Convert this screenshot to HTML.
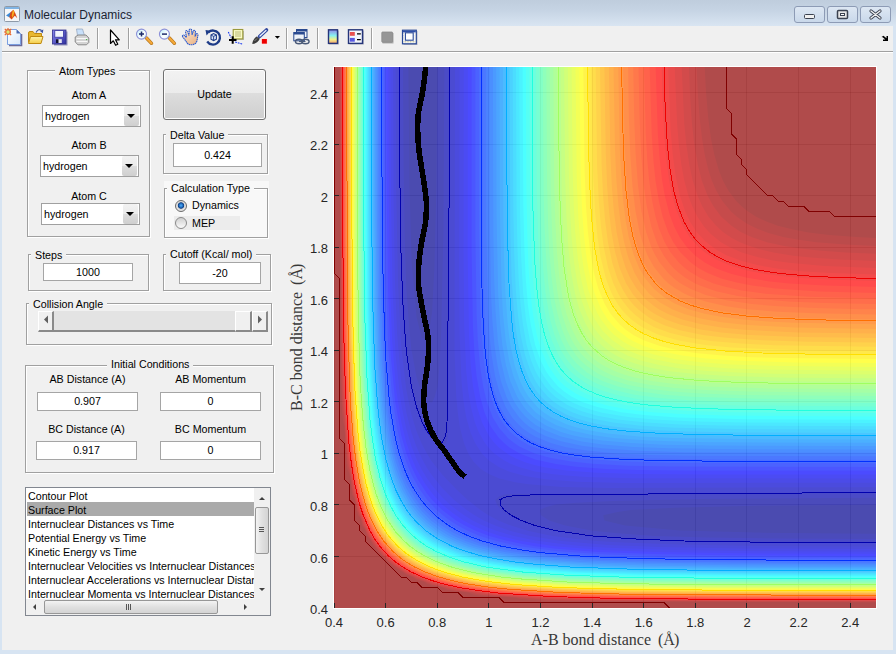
<!DOCTYPE html>
<html><head><meta charset="utf-8">
<style>
*{margin:0;padding:0;box-sizing:border-box}
html,body{width:896px;height:654px;overflow:hidden;background:#f0f0f0;font-family:"Liberation Sans",sans-serif;font-size:10.7px;color:#000}
.a{position:absolute}
#title{left:0;top:0;width:896px;height:26px;background:linear-gradient(#bfcddd,#c6d4e4 40%,#d9e5f2)}
#bl{left:0;top:26px;width:2px;height:628px;background:#d7e4f2}
#br{left:893px;top:26px;width:3px;height:628px;background:#d7e4f2}
#bb{left:0;top:650px;width:896px;height:4px;background:#d7e4f2}
#tbsep{left:2px;top:51px;width:891px;height:1px;background:#a0a0a0}
#tbsep2{left:2px;top:52px;width:891px;height:1px;background:#fff}
.panel{position:absolute;border:1px solid #a0a0a0;box-shadow:1px 1px 0 #fff, inset 1px 1px 0 #fff}
.ptitle{position:absolute;background:#f0f0f0;padding:0 4px;white-space:nowrap;line-height:13px}
.lbl{position:absolute;white-space:nowrap;line-height:13px;text-align:center}
.edit{position:absolute;background:#fff;border:1px solid #a5a5a5;text-align:center;line-height:17px}
.dd{position:absolute;background:#fff;border:1px solid #a0a0a0;line-height:21px;padding-left:2px}
.ddb{position:absolute;right:1px;top:0;bottom:0;width:15px;background:linear-gradient(#f2f2f2 0,#ebebeb 50%,#dddddd 50%,#cfcfcf 100%);border-radius:2px}
.ddb:after{content:"";position:absolute;left:3px;top:8px;border-left:4px solid transparent;border-right:4px solid transparent;border-top:4px solid #000}
.xt{position:absolute;top:615px;width:40px;text-align:center;font-size:13px;color:#262626;line-height:14px}
.yt{position:absolute;left:288px;width:40px;text-align:right;font-size:13px;color:#262626;line-height:14px}
.li{position:absolute;left:2px;height:14px;line-height:14px;white-space:nowrap}
.tsep{position:absolute;top:28px;width:1px;height:21px;background:#a0a0a0;box-shadow:1px 0 0 #fff}
.wb{position:absolute;top:6px;height:17px;border:1px solid #8d9bb5;border-radius:3px;background:linear-gradient(#dde7f3,#c9d8ea)}
</style></head><body>
<div class="a" id="title"></div>
<div class="a" id="bl"></div><div class="a" id="br"></div><div class="a" id="bb"></div>
<div class="a" id="tbsep"></div><div class="a" id="tbsep2"></div>
<div class="a" style="left:24px;top:8px;font-size:12px;color:#1b2433;line-height:15px">Molecular Dynamics</div>
<!-- window buttons -->
<div class="wb" style="left:794px;width:31px"></div>
<div class="wb" style="left:827px;width:31px"></div>
<div class="wb" style="left:860px;width:31px"></div>
<svg class="a" style="left:0;top:0" width="896" height="26">
 <rect x="4.5" y="6.5" width="15" height="15" rx="1" fill="#f6f7f8" stroke="#8e9aa8"/>
 <rect x="5" y="7" width="14" height="2" fill="#80b4e4"/>
 <path d="M6 15.5 L10.5 12.3 L12.2 14.6 L9.3 17.2 Z" fill="#3a8ad8"/>
 <path d="M10.5 12.3 L13.4 9.8 L15.2 13 L17.3 18.2 L14.8 15.8 L11.6 19.6 L9.3 17.2 Z" fill="#d84a18"/>
 <path d="M13.4 9.8 L14.3 12.3 L12.8 18 L11.8 15.3 L12.5 11.5 Z" fill="#f8b020"/>
 <rect x="804.5" y="14.5" width="10" height="4" rx="1" fill="#f0f0f0" stroke="#3b4250"/>
 <rect x="837.5" y="10.5" width="10" height="8" rx="1" fill="#e6e6e6" stroke="#3b4250" stroke-width="1.5"/>
 <rect x="840.5" y="13.5" width="4" height="2" fill="#fff" stroke="#3b4250" stroke-width="1"/>
 <path d="M871 11 L880 18 M880 11 L871 18" stroke="#3b4250" stroke-width="3.2" stroke-linecap="round"/>
 <path d="M871 11 L880 18 M880 11 L871 18" stroke="#f2f2f2" stroke-width="1.4" stroke-linecap="round"/>
</svg>
<!-- toolbar icons -->
<div class="tsep" style="left:97px"></div>
<div class="tsep" style="left:128px"></div>
<div class="tsep" style="left:286px"></div>
<div class="tsep" style="left:317px"></div>
<div class="tsep" style="left:371px"></div>
<svg class="a" style="left:0;top:0" width="896" height="54">
 <defs>
  <linearGradient id="pg" x1="0" y1="0" x2="1" y2="1"><stop offset="0" stop-color="#ffffff"/><stop offset="1" stop-color="#d8e8fa"/></linearGradient>
  <linearGradient id="fg" x1="0" y1="0" x2="0" y2="1"><stop offset="0" stop-color="#fff4a8"/><stop offset="1" stop-color="#f4cc48"/></linearGradient>
  <linearGradient id="sg" x1="0" y1="0" x2="1" y2="1"><stop offset="0" stop-color="#8a88f0"/><stop offset="1" stop-color="#3030a0"/></linearGradient>
  <linearGradient id="lg" x1="0" y1="0" x2="1" y2="1"><stop offset="0" stop-color="#b8ecf8"/><stop offset="0.6" stop-color="#ffffff"/><stop offset="1" stop-color="#c8f0f8"/></linearGradient>
  <linearGradient id="hg" x1="0" y1="0" x2="1" y2="1"><stop offset="0" stop-color="#fde8d4"/><stop offset="1" stop-color="#e8b080"/></linearGradient>
  <linearGradient id="cb" x1="0" y1="0" x2="0" y2="1"><stop offset="0" stop-color="#9088e8"/><stop offset="0.42" stop-color="#88f0f0"/><stop offset="0.72" stop-color="#f4f088"/><stop offset="1" stop-color="#f4a070"/></linearGradient>
 </defs>
 <!-- new -->
 <path d="M9 45.5 H21.5 V34" fill="none" stroke="#6a6a9a" stroke-width="1.6"/>
 <path d="M7.5 29.5 H16.5 L20.5 33.5 V44.5 H7.5 Z" fill="url(#pg)" stroke="#7a9ee0"/>
 <path d="M16.5 29.5 V33.5 H20.5 Z" fill="#4a68b0"/>
 <g stroke="#e86a30" stroke-width="1.2"><path d="M4.8 28.8 L6 30 M11.2 28.8 L10 30 M4.8 35.2 L6 34 M11.2 35.2 L10 34 M8 28 V29 M4 32 H5"/></g>
 <circle cx="8" cy="32" r="2.3" fill="#d8e870" stroke="#e86a30" stroke-width="1.3"/>
 <!-- open -->
 <path d="M28.5 42.5 V33 Q28.5 31.5 30 31.5 H33 L34.5 33.5 H41.5 V36" fill="#e8b830" stroke="#c08a10"/>
 <path d="M28.5 43.5 L30.5 36.5 H43 L41 43.5 Z" fill="url(#fg)" stroke="#c08a10"/>
 <path d="M36 32.5 Q38.5 28 41.5 30.5" fill="none" stroke="#4a62a0" stroke-width="1.3"/>
 <path d="M40 31 L43.3 29.5 L42.8 33.3 Z" fill="#3a52a0"/>
 <!-- save -->
 <rect x="54" y="31.5" width="13.5" height="14" fill="#5858a0" opacity="0.6"/>
 <rect x="52.5" y="30" width="13.5" height="14" fill="url(#sg)" stroke="#30308a" stroke-width="0.8"/>
 <rect x="54.8" y="30.6" width="8.6" height="6.6" fill="#f0f4fc" stroke="#3838a0" stroke-width="0.8"/>
 <rect x="56" y="39.2" width="5.8" height="3.8" fill="#e8e8f0"/>
 <rect x="56" y="39.2" width="2.5" height="3.8" fill="#101030"/>
 <!-- print -->
 <path d="M76.5 29 H82.5 L84.5 35.5 H77.5 Z" fill="#c8e0fa" stroke="#98a8c0" stroke-width="0.8"/>
 <path d="M75.2 37 L78 35 H86 L88.8 38 V42.5 L86.5 44.8 H78 L75.2 42 Z" fill="#d4d4d4" stroke="#808080" stroke-width="0.9"/>
 <path d="M76.5 38.5 H87.5 M76.5 41.5 H87.5" stroke="#f8f8f8" stroke-width="1"/>
 <circle cx="86.6" cy="39.6" r="0.7" fill="#40b040"/>
 <!-- pointer -->
 <path d="M110.5 30 V43.5 L113.3 40.8 L115.6 45.3 L117.8 44.3 L115.5 39.8 H119.3 Z" fill="#fff" stroke="#000" stroke-width="1.2" stroke-linejoin="round"/>
 <!-- zoom in -->
 <path d="M146.5 38 L151.5 43.3" stroke="#b07018" stroke-width="3.4" stroke-linecap="round"/>
 <path d="M146.5 38 L151.5 43.3" stroke="#f4a838" stroke-width="2.2" stroke-linecap="round"/>
 <circle cx="141.5" cy="34.1" r="5" fill="url(#lg)" stroke="#8c90d8" stroke-width="1.1"/>
 <path d="M139 34.1 H144 M141.5 31.6 V36.6" stroke="#1c2a6a" stroke-width="1.5"/>
 <!-- zoom out -->
 <path d="M169.4 38 L174.4 43.3" stroke="#b07018" stroke-width="3.4" stroke-linecap="round"/>
 <path d="M169.4 38 L174.4 43.3" stroke="#f4a838" stroke-width="2.2" stroke-linecap="round"/>
 <circle cx="164.4" cy="34.1" r="5" fill="url(#lg)" stroke="#8c90d8" stroke-width="1.1"/>
 <path d="M162 34.1 H167" stroke="#1c2a6a" stroke-width="1.5"/>
 <!-- hand -->
 <path d="M182.5 36.5 Q182 35 183.8 35 L186.5 37.5 L185.5 31.5 Q186 30 187.5 30.8 L189 35.5 L189.3 29.5 Q190.5 28.5 191.5 29.5 L192 35 L193.5 30.5 Q195 30 195.5 31.5 L195 36.5 L196.5 33.5 Q198 33.5 198 35 L197 40.5 Q196 44.8 191 44.8 Q188 44.8 186.5 42 Z" fill="url(#hg)" stroke="#2a5ad0" stroke-width="1.1" stroke-dasharray="1.6 0.5"/>
 <!-- rotate -->
 <path d="M208.3 32.3 A7 7 0 1 1 207.2 41.5" fill="none" stroke="#1e3c88" stroke-width="2.3"/>
 <path d="M205.5 30 L210.8 30.8 L206.5 35.5 Z" fill="#1e3c88"/>
 <path d="M211 35 L213.6 33.6 L216.4 35 V39.2 L213.6 40.6 L211 39.2 Z" fill="#dce6f8" stroke="#1e3c88" stroke-width="1.1"/>
 <path d="M211 35 L213.6 36.4 L216.4 35 M213.6 36.4 V40.6" fill="none" stroke="#1e3c88" stroke-width="0.9"/>
 <!-- data cursor -->
 <rect x="234" y="31" width="10" height="9" fill="#6a6a50" opacity="0.4"/>
 <rect x="233.2" y="29.5" width="9.6" height="9.4" fill="#fafac4" stroke="#9a9a3a" stroke-width="1.1"/>
 <path d="M235 32 H241 M235 34 H241 M235 36 H241" stroke="#a8a868" stroke-width="0.8"/>
 <path d="M228.3 32 L231 37.5 M235.2 42 L243 44.3" stroke="#1838f0" stroke-width="1.1" stroke-dasharray="1.8 0.9"/>
 <path d="M229 40 H236.5 M232.7 36.2 V43.8" stroke="#000" stroke-width="2"/>
 <!-- brush -->
 <path d="M259.5 36.5 L266.5 30" stroke="#3048a0" stroke-width="3.6" stroke-linecap="round"/>
 <path d="M260 36 L266 30.6" stroke="#e8f0ff" stroke-width="1.4" stroke-linecap="round"/>
 <path d="M252.3 44 Q252.5 39.5 256.5 36.5 L259.8 38.8 Q257.5 43.5 252.3 44 Z" fill="#3c3c3c"/>
 <path d="M254.5 41 L257 38.5" stroke="#aaa" stroke-width="0.7"/>
 <rect x="261.3" y="38.6" width="6" height="5.5" fill="#ee0000" stroke="#fff" stroke-width="0.8"/>
 <path d="M274.8 36 H280 L277.4 38.7 Z" fill="#000"/>
 <!-- link -->
 <rect x="296.5" y="29.5" width="10.5" height="8" fill="#f4f6fa" stroke="#2a4a90" stroke-width="1"/>
 <rect x="296.5" y="29.5" width="10.5" height="2" fill="#2a4a90"/>
 <rect x="293.8" y="32.5" width="10.5" height="8.3" fill="#eef2f8" stroke="#2a4a90" stroke-width="1"/>
 <rect x="293.8" y="32.5" width="10.5" height="2" fill="#2a4a90"/>
 <ellipse cx="299" cy="41.5" rx="3.6" ry="2.2" fill="none" stroke="#4a5a78" stroke-width="1.4"/>
 <ellipse cx="305.5" cy="41.5" rx="3.6" ry="2.2" fill="none" stroke="#4a5a78" stroke-width="1.4"/>
 <path d="M299 41.5 H305.5" stroke="#4a5a78" stroke-width="1.2"/>
 <!-- colorbar -->
 <rect x="329" y="30.5" width="10" height="14" fill="#606080" opacity="0.4"/>
 <rect x="328.5" y="29.8" width="9" height="13.6" fill="url(#cb)" stroke="#25357a" stroke-width="1.4"/>
 <!-- legend -->
 <rect x="349.5" y="30.5" width="14.5" height="14" fill="#606080" opacity="0.4"/>
 <rect x="348.5" y="29.8" width="14" height="13.6" fill="#f2f5fc" stroke="#25357a" stroke-width="1.4"/>
 <rect x="349.8" y="32" width="5" height="3.8" fill="#e85050"/>
 <rect x="349.8" y="37.9" width="5" height="3.8" fill="#5858e0"/>
 <path d="M357 33.8 H360.8 M357 39.6 H360.8" stroke="#000" stroke-width="1.3"/>
 <!-- hide tools -->
 <rect x="382.5" y="33" width="11" height="10.5" fill="#707070" opacity="0.5"/>
 <rect x="381.8" y="32" width="10.8" height="10.3" rx="0.8" fill="#969696" stroke="#8a8a8a" stroke-width="0.8"/>
 <!-- show tools -->
 <rect x="403.5" y="31" width="14" height="14" fill="#606080" opacity="0.4"/>
 <rect x="402.5" y="30.2" width="13.8" height="13.6" fill="#fff" stroke="#2a4a98" stroke-width="1.2"/>
 <rect x="403" y="30.6" width="12.8" height="1.8" fill="#3050a8"/>
 <rect x="405.4" y="32.8" width="7.8" height="7.4" fill="#fff" stroke="#2a4a98" stroke-width="1.1"/>
 <path d="M403.5 41.8 H415.5" stroke="#c8c8a8" stroke-width="1.6" stroke-dasharray="1 0.6"/>
 <path d="M403.6 33 V40 M415.2 33 V40" stroke="#c8c8c8" stroke-width="1" stroke-dasharray="1 0.8"/>
 <!-- right arrow -->
 <path d="M881.5 37 L883.5 35.7 L886.5 38.3 V36 H888 V41 H883 V39.5 H885.3 L882.7 37.3 Z" fill="#000"/>
</svg>

<!-- Atom types panel -->
<div class="panel" style="left:27px;top:70px;width:123px;height:167px"></div>
<div class="ptitle" style="left:55px;top:65px">Atom Types</div>
<div class="lbl" style="left:40px;top:89px;width:98px">Atom A</div>
<div class="dd" style="left:42px;top:105px;width:99px;height:22px">hydrogen<div class="ddb"></div></div>
<div class="lbl" style="left:40px;top:139px;width:98px">Atom B</div>
<div class="dd" style="left:40px;top:155px;width:99px;height:22px">hydrogen<div class="ddb"></div></div>
<div class="lbl" style="left:40px;top:190px;width:98px">Atom C</div>
<div class="dd" style="left:41px;top:203px;width:99px;height:22px">hydrogen<div class="ddb"></div></div>

<!-- Update button -->
<div class="a" style="left:163px;top:69px;width:103px;height:51px;border:1px solid #707070;border-radius:3px;background:linear-gradient(#f2f2f2 0,#ebebeb 47%,#dddddd 47%,#cfcfcf 100%);box-shadow:inset 0 0 0 1px #fcfcfc;text-align:center;line-height:49px">Update</div>

<!-- Delta -->
<div class="panel" style="left:163px;top:134px;width:105px;height:40px"></div>
<div class="ptitle" style="left:166px;top:129px">Delta Value</div>
<div class="edit" style="left:173px;top:143px;width:89px;height:24px;line-height:22px">0.424</div>

<!-- Calc type -->
<div class="a" style="left:164px;top:181px;width:105px;height:58px;background:#f8f8f8"></div>
<div class="panel" style="left:164px;top:188px;width:104px;height:50px"></div>
<div class="ptitle" style="left:167px;top:182px;background:#f8f8f8">Calculation Type</div>
<div class="a" style="left:175px;top:200px;width:12px;height:12px;border-radius:50%;border:1px solid #6a6a6a;background:radial-gradient(circle at 50% 45%,#4fb0ff 0,#1a60b0 30%,#0a3a80 38%,#d8d8d8 48%,#f6f6f6 100%)"></div>
<div class="lbl" style="left:192px;top:199px">Dynamics</div>
<div class="a" style="left:174px;top:216px;width:66px;height:14px;background:#ececec"></div>
<div class="a" style="left:175px;top:217px;width:12px;height:12px;border-radius:50%;border:1px solid #8a8a8a;background:linear-gradient(#d0d0d0,#fafafa)"></div>
<div class="lbl" style="left:192px;top:217px">MEP</div>

<!-- Steps -->
<div class="panel" style="left:28px;top:254px;width:121px;height:37px"></div>
<div class="ptitle" style="left:31px;top:249px">Steps</div>
<div class="edit" style="left:43px;top:263px;width:90px;height:18px">1000</div>
<!-- Cutoff -->
<div class="panel" style="left:163px;top:254px;width:108px;height:37px"></div>
<div class="ptitle" style="left:166px;top:248px">Cutoff (Kcal/ mol)</div>
<div class="edit" style="left:179px;top:262px;width:82px;height:22px;line-height:20px">-20</div>
<!-- Collision angle -->
<div class="panel" style="left:26px;top:303px;width:246px;height:42px"></div>
<div class="ptitle" style="left:29px;top:298px">Collision Angle</div>
<div class="a" style="left:38px;top:311px;width:230px;height:21px;background:#e3e3e3;border-bottom:2px solid #8a8a8a"></div>
<div class="a" style="left:38px;top:311px;width:16px;height:21px;background:#f0f0f0;border-left:1px solid #fff;border-top:1px solid #fff;border-right:2px solid #8a8a8a;border-bottom:2px solid #8a8a8a"></div>
<div class="a" style="left:235px;top:311px;width:17px;height:21px;background:#f0f0f0;border-left:1px solid #fff;border-top:1px solid #fff;border-right:2px solid #8a8a8a;border-bottom:2px solid #8a8a8a"></div>
<div class="a" style="left:252px;top:311px;width:16px;height:21px;background:#f0f0f0;border-left:1px solid #fff;border-top:1px solid #fff;border-right:2px solid #8a8a8a;border-bottom:2px solid #8a8a8a"></div>
<svg class="a" style="left:38px;top:311px" width="230" height="21"><path d="M6 8.5 L10 4.5 V12.5 Z" fill="#606060"/><path d="M224 8.5 L220 4.5 V12.5 Z" fill="#606060"/></svg>

<!-- Initial conditions -->
<div class="panel" style="left:25px;top:365px;width:249px;height:108px"></div>
<div class="ptitle" style="left:107px;top:358px">Initial Conditions</div>
<div class="lbl" style="left:37px;top:373px;width:101px">AB Distance (A)</div>
<div class="edit" style="left:37px;top:392px;width:101px;height:19px">0.907</div>
<div class="lbl" style="left:160px;top:373px;width:101px">AB Momentum</div>
<div class="edit" style="left:160px;top:392px;width:101px;height:19px">0</div>
<div class="lbl" style="left:36px;top:423px;width:101px">BC Distance (A)</div>
<div class="edit" style="left:36px;top:441px;width:101px;height:19px">0.917</div>
<div class="lbl" style="left:160px;top:423px;width:101px">BC Momentum</div>
<div class="edit" style="left:160px;top:441px;width:101px;height:19px">0</div>

<!-- listbox -->
<div class="a" style="left:25px;top:487px;width:246px;height:129px;background:#fff;border:1px solid #828790;overflow:hidden">
 <div class="a" style="left:0;top:0;width:228px;height:112px;overflow:hidden">
  <div class="a" style="left:1px;top:14px;width:227px;height:14px;background:#aaaaaa"></div>
  <div class="li" style="top:1px">Contour Plot</div>
  <div class="li" style="top:15px">Surface Plot</div>
  <div class="li" style="top:29px">Internuclear Distances vs Time</div>
  <div class="li" style="top:43px">Potential Energy vs Time</div>
  <div class="li" style="top:57px">Kinetic Energy vs Time</div>
  <div class="li" style="top:71px">Internuclear Velocities vs Internuclear Distances</div>
  <div class="li" style="top:85px">Internuclear Accelerations vs Internuclear Distances</div>
  <div class="li" style="top:99px">Internuclear Momenta vs Internuclear Distances</div>
 </div>
 <div class="a" style="left:228px;top:0;width:16px;height:111px;background:#f0f0f0"></div>
 <div class="a" style="left:229px;top:19px;width:14px;height:47px;border:1px solid #979797;border-radius:2px;background:linear-gradient(90deg,#f3f3f3,#e0e0e0 50%,#d4d4d4)"></div>
 <svg class="a" style="left:228px;top:0" width="16" height="111"><path d="M5 12 L8 9 L11 12 Z" fill="#404040"/><path d="M5 100 L8 103 L11 100 Z" fill="#404040"/><path d="M5 39.5 H10 M5 41.5 H10 M5 43.5 H10" stroke="#555" stroke-width="1"/></svg>
 <div class="a" style="left:0;top:111px;width:244px;height:16px;background:#f0f0f0"></div>
 <div class="a" style="left:18px;top:112px;width:174px;height:14px;border:1px solid #979797;border-radius:2px;background:linear-gradient(#f3f3f3,#e0e0e0 50%,#d4d4d4)"></div>
 <svg class="a" style="left:0;top:111px" width="244" height="16"><path d="M7 8 L10 5 V11 Z" fill="#404040"/><path d="M221 8 L218 5 V11 Z" fill="#404040"/><path d="M100.5 5 V11 M102.5 5 V11 M104.5 5 V11" stroke="#555" stroke-width="1"/></svg>
</div>

<div class="a" style="left:333px;top:66px;width:544px;height:543px;background:#fff"></div><svg id="plot" width="542" height="541" viewBox="0 0 542 541" style="position:absolute;left:334px;top:67px;overflow:hidden"><rect width="542" height="541" fill="#fff"/><path d="M0.5 0V541M0 541.5H542M51.5 0V541M0 489.5H542M103.5 0V541M0 437.5H542M154.5 0V541M0 386.5H542M206.5 0V541M0 334.5H542M258.5 0V541M0 283.5H542M309.5 0V541M0 231.5H542M361.5 0V541M0 180.5H542M412.5 0V541M0 128.5H542M464.5 0V541M0 77.5H542M516.5 0V541M0 25.5H542" stroke="#262626" stroke-opacity="0.15" stroke-width="1" fill="none"/><g opacity="0.7"><rect x="0" y="0" width="542" height="541" fill="#00008f"/><path fill="#00009f" d="M0 541L542 541 542 466.7 423.3 465.6 345.8 463.4 291.3 458.6 270.5 453.4 269.2 448.3 283.9 445.1 296.9 443.1 340.7 440.8 423.3 438.7 542 437.7 542 0 103.5 0 102.4 118.5 100.4 200.9 98.1 244.7 96.1 257.6 92.9 272.3 87.8 271 82.6 250.2 77.7 195.8 75.5 118.5 74.4 0 0 0 0 541Z"/><path fill="#0000af" d="M0 541L542 541 542 472.1 443.9 471.5 371.7 470.4 320.7 468.9 283.9 466.2 259 463.7 231.1 458.6 215.3 453.4 207 448.3 205.9 443.1 211.6 440.3 222 437.6 242.6 435.7 278.7 433.9 376.8 431.8 542 430.8 542 0 110.4 0 109.4 164.9 107.3 262.8 105.5 298.8 103.6 319.4 100.8 329.8 98.1 335.5 92.9 334.4 87.8 326.1 82.6 310.4 77.4 282.5 75 257.6 72.3 220.9 70.7 170 69.6 97.9 69 0 0 0 0 541Z"/><path fill="#0000bf" d="M0 541L542 541 542 476.1 423.3 475.5 345.8 474.2 299.4 472.3 253.2 468.9 219.1 463.7 198.7 458.6 184.8 453.4 174.8 448.3 167.7 443.1 163 438 161.3 432.8 165.2 429.2 170.1 427.6 180.7 427 542 425.2 542 0 116 0 114.2 360.7 113.6 371.3 112 376.1 108.4 380 103.2 378.3 98.1 373.6 92.9 366.5 87.8 356.6 82.6 342.7 77.4 322.3 72.3 288.2 68.8 242.2 66.9 195.8 65.7 118.5 65.1 0 0 0 0 541Z"/><path fill="#0000cf" d="M0 541L542 541 542 479.4 428.4 478.9 345.8 477.6 283.9 475.3 263.5 474 242.6 471.9 218.9 468.9 206.5 466.4 194 463.7 177.1 458.6 164.5 453.4 154.6 448.3 146.6 443.1 133.5 432.8 122.6 422.5 108.4 407.7 98.1 394.7 92.9 386.6 87.8 376.8 82.6 364.3 77.4 347.4 72.3 322.5 67.1 278 64.1 216.4 62.3 128.8 61.7 0 0 0 0 541ZM194.6 417.3L227.1 419.9 273.6 420.9 542 420.2 542 0 121 0 120.5 283.4 122.2 329.8 123.7 345.2 125.9 360.7 129.9 376.1 134.2 386.4 139.4 394.6 146.7 401.9 154.9 407 165.2 411.4 180.7 415.3 194.6 417.3Z"/><path fill="#0000df" d="M0 541L542 541 542 482.1 407.8 481.5 325.2 480.1 273.6 477.9 227.8 474 196.1 468.9 175.8 463.7 161.2 458.6 149.8 453.4 140.6 448.3 132.8 443.1 119.9 432.8 108.4 421.3 98.1 408.5 92.9 400.7 87.8 391.5 82.6 380.1 77.4 365.5 72.3 345.3 67.2 314.3 63.2 267.9 61 216.4 59.6 134 59 0 0 0 0 541ZM211.2 412.2L242.6 414.7 289.1 415.9 542 415.7 542 0 125.6 0 125.1 200.9 125.6 267.9 127.5 314.3 129.6 334.9 132.2 350.4 136.6 365.8 141.1 376.1 147.9 386.4 154.9 393.4 165.2 400.2 175.5 404.7 191 409 211.2 412.2Z"/><path fill="#0000ef" d="M0 541L542 541 542 484.7 423.3 484.3 340.7 483.1 273.6 480.7 248.6 479.2 232.3 477.6 206.5 474.3 196.2 472.4 179.2 468.9 162 463.7 148.9 458.6 138.6 453.4 129 447.6 116.3 438 108.4 430.5 98.1 418.6 92.9 411.3 87.8 402.7 82.6 392.3 77.4 379.3 72.3 362.1 67.7 340.1 66.1 329.8 61.6 288.5 58.5 221.6 57 134 56.4 0 0 0 0 541ZM217.7 407L232.3 408.6 252.9 410 299.4 411.3 542 411.4 542 0 129.8 0 129.6 185.5 130.2 257.6 132.2 304 134.3 324.6 136.9 340.1 140.9 355.5 145 365.8 151 376.1 155.1 381.3 160.3 386.4 170.3 393.6 176.6 396.7 185.8 400.3 201.3 404.4 217.7 407Z"/><path fill="#0000ff" d="M0 541L542 541 542 486.8 407.8 486.3 320 485 268.4 483 220.5 479.2 185.8 473.7 166 468.9 150.8 463.7 139 458.6 129.5 453.4 118.7 446.1 108.8 438 99.1 427.6 91.4 417.3 82.6 402.3 77.4 390.5 72.3 375.4 67.4 355.5 61.9 320.9 58.1 273.1 56.1 221.6 54.8 134 54.3 0 0 0 0 541ZM303 407L371.7 407.6 542 407.4 542 0 133.8 0 133.7 190.6 135 267.9 136.7 298.8 139 319.4 143 340.1 148 355.5 154.9 368.7 160 375.5 165.2 380.8 175.5 388.2 181.9 391.6 191 395.2 201.3 398.3 211.6 400.5 232.3 403.5 263.3 405.8 303 407Z"/><path fill="#0010ff" d="M0 541L542 541 542 488.9 407.8 488.4 325.2 487.2 263.3 485 222 481.7 200.7 479.2 185.8 476.5 173.5 474 155.1 468.9 141.5 463.7 130.8 458.6 122 453.4 108.2 443.1 98.1 433 92.9 426.6 83.6 412.2 77.4 399.7 72.3 386.2 67.1 367.9 61.2 334.9 56.8 290.3 54.1 226.7 52.8 139.1 52.2 0 0 0 0 541ZM272.9 401.9L304.6 403 351 403.5 542 403.6 542 0 137.7 0 137.6 180.3 138.9 257.6 140.6 288.5 142.6 309.1 146.2 329.8 150.5 345.2 154.8 355.5 157.6 360.7 165 371 170.2 376.1 175.5 380.4 185.8 386.5 201.3 392.4 222 397.1 242.6 399.8 272.9 401.9Z"/><path fill="#0020ff" d="M0 541L542 541 542 490.8 413 490.4 333 489.5 268.4 487.3 222 484.1 185.4 479.2 162.3 474 146 468.9 133.6 463.7 123.7 458.6 113.6 451.9 103.2 443.5 93.1 432.8 85.7 422.5 77.4 407.6 72.3 395.2 67.1 379 62.9 360.7 57.6 324.6 54.1 278.2 51.7 211.2 50.7 128.8 50.3 0 0 0 0 541ZM258.4 396.7L294.2 398.7 340.7 399.6 542 399.9 542 0 141.4 0 141.4 170 142.6 247.3 143.8 273.1 146 298.8 149.2 319.4 152.9 334.9 158.8 350.4 165.2 361.1 173.9 371 180.2 376.1 185.8 379.7 200.6 386.4 216.8 391 237.4 394.6 258.4 396.7Z"/><path fill="#0030ff" d="M0 541L542 541 542 492.5 402.6 492 314.9 490.8 263.3 489.1 211.6 485.1 196.2 483.1 173.1 479.2 149.7 473 138.2 468.9 126.9 463.7 117.7 458.6 103.2 448 93.2 438 85.3 427.6 77.4 414.4 72.3 403.1 67.1 388.4 62.6 371 56.8 336.8 52.6 288.5 50.4 231.9 49.1 144.3 48.6 0 0 0 0 541ZM249.1 391.6L283.9 394.3 335.5 395.7 542 396.2 542 0 145 0 145.1 159.7 146.2 237 147.6 267.9 149.3 288.5 152 309.1 155.3 324.6 160.3 340.1 165.2 350.3 168.4 355.5 175.5 364.3 185.8 372.9 196.2 378.8 211.6 384.6 227.1 388.3 249.1 391.6Z"/><path fill="#0040ff" d="M0 541L542 541 542 494.2 407.8 493.8 320 492.6 252.9 490.3 211.6 487 189.6 484.3 175.5 481.8 162.9 479.2 144.8 474 131.4 468.9 120.9 463.7 108.4 455.8 99.1 448.3 89.3 438 82.6 428.9 77.4 420.3 71.1 407 67.1 396.5 61.9 378.4 56.8 351.8 54.6 334.9 51.1 293.7 48.6 226.7 47.3 139.1 46.9 0 0 0 0 541ZM314.9 391.6L387.1 392.6 542 392.7 542 0 148.6 0 148.8 175.2 149.4 216.4 150.7 252.5 152.9 283.4 155.7 304 160 323.7 165.2 338.3 170.3 348.3 175.4 355.5 179.9 360.7 185.7 365.8 196.2 372.8 203.1 376.1 211.6 379.4 222 382.4 232.3 384.7 252.9 387.8 278.7 390 314.9 391.6Z"/><path fill="#0050ff" d="M0 541L542 541 542 495.7 413 495.4 330.4 494.6 268.4 492.7 216.6 489.5 177.4 484.3 154.9 479.4 144.5 476.3 129 470.5 118.7 465.4 107.5 458.6 98.1 451 90.1 443.1 82 432.8 73 417.3 67.1 403.5 61.9 387.2 58.2 371 55.5 355.5 52.7 334.9 51.2 319.4 49.1 288.5 46.7 221.6 45.8 139.1 45.3 0 0 0 0 541ZM283.3 386.4L314.9 387.9 361.3 388.8 542 389.2 542 0 152.1 0 152.3 159.7 153.8 237 155.5 267.9 157.7 288.5 161.1 309.1 165.3 324.6 171.7 340.1 178.3 350.4 182.6 355.5 188 360.7 194.9 365.8 201.3 369.6 216.8 376 232.3 380.2 252.9 383.6 283.3 386.4Z"/><path fill="#0060ff" d="M0 541L542 541 542 497.2 397.5 496.7 309.7 495.6 252.9 493.6 206.5 490.1 170.3 484.9 144.5 478.6 131.5 474 120 468.9 108.4 462.1 96.9 453.4 87.8 444.3 79 432.8 72.3 421.2 67.1 409.8 61.9 394.9 57.2 376.1 51.6 341.3 47.7 293.7 45.6 237 44.4 149.4 43.9 0 0 0 0 541ZM267.6 381.3L304.6 383.8 351 385.2 542 385.8 542 0 155.5 0 155.7 149.4 157 226.7 158.3 252.5 160.5 278.2 163.5 298.8 167 314.3 172.4 329.8 177.6 340.1 185.8 351.1 191 356.2 196.6 360.7 205 365.8 211.6 369 227.1 374.3 247.8 378.7 267.6 381.3Z"/><path fill="#0070ff" d="M0 541L542 541 542 498.6 402.6 498.2 314.9 497.1 247.8 494.9 206.5 491.7 186.9 489.5 170.3 486.7 158.4 484.3 139.6 479.2 125.9 474 115.1 468.9 103.2 461.4 93.2 453.4 83.6 443.1 77.4 434.7 72.3 426.1 65.8 412.2 61.9 401.7 56.8 382.9 51.8 355.5 49.9 340.1 46.4 298.8 44 231.9 42.9 144.3 42.5 0 0 0 0 541ZM334.3 381.3L407.8 382.3 542 382.4 542 0 158.9 0 159.3 164.9 160.1 211.2 161.4 242.2 163.8 273.1 166.8 293.7 171.7 314.3 177.7 329.8 180.7 335.4 185.8 343 191 349 196.2 353.8 201.3 357.7 211.6 363.6 227.1 369.6 247.8 374.5 268.4 377.5 299.4 379.9 334.3 381.3Z"/><path fill="#0080ff" d="M0 541L542 541 542 500 407.8 499.7 320 498.7 258.1 496.8 211.6 493.8 185.8 490.9 170.3 488.5 150.8 484.3 134.2 479.4 120.8 474 110.7 468.9 102.5 463.7 92.9 456.1 85 448.3 76.9 438 68.1 422.5 61.9 407.7 56.8 390.5 53.6 376.1 51.6 365.5 48.3 340.1 46.5 321.2 44.8 293.7 42.5 226.7 41.4 139.1 41.1 0 0 0 0 541ZM297.2 376.1L330.4 377.7 376.8 378.6 542 379.1 542 0 162.2 0 162.6 149.4 164.2 226.7 166.2 257.6 168.4 278.2 172.1 298.8 176.4 314.3 183.2 329.8 189.9 340.1 194.4 345.2 200 350.4 211.6 358.2 227.1 364.9 237.4 368 247.8 370.3 268.4 373.6 297.2 376.1Z"/><path fill="#008fff" d="M0 541L542 541 542 501.2 397.5 500.8 309.7 499.9 252.9 498 203.8 494.6 166.5 489.5 144.5 484.5 134.2 481.2 123.9 477.4 113.6 472.7 103.2 466.7 92.4 458.6 82.6 448.8 74.5 438 67.1 425 61.9 413.1 56.8 397.3 51.9 376.1 46.7 340.1 43.4 293.7 41.3 236.3 40.3 149.4 39.8 0 0 0 0 541ZM279.6 371L314.9 373.5 361.3 374.9 428.4 375.6 542 375.7 542 0 165.6 0 165.9 144.3 167.6 221.6 169 247.3 171.7 273.1 175.2 293.7 179.4 309.1 185.8 324.6 192.3 334.9 201.3 344.9 211.6 352.6 222 358 237.4 363.5 258.1 368.1 279.6 371Z"/><path fill="#009fff" d="M0 541L542 541 542 502.5 397.5 502.1 309.7 501.1 252.9 499.4 201.3 495.7 180.7 493.2 160 489.8 134.2 483.1 123.2 479.2 111.9 474 102.9 468.9 89.4 458.6 79.6 448.3 72.3 438.3 67.1 429.3 61.9 418 56.8 403.4 52.4 386.4 49.5 371 46.4 350.4 42.3 298.8 40.2 242.2 39.1 154.6 38.6 0 0 0 0 541ZM339.2 371L407.8 372.1 542 372.4 542 0 168.9 0 169.3 149.4 170 190.6 171.4 226.7 173.7 257.6 176.4 278.2 180.8 298.8 186.1 314.3 191 324.1 194.6 329.8 203.4 340.1 209.5 345.2 216.8 350.1 232.3 357.2 242.6 360.5 252.9 363 273.6 366.5 304.6 369.4 339.2 371Z"/><path fill="#00afff" d="M0 541L542 541 542 503.7 397.5 503.3 309.7 502.3 242.6 500.1 201.3 497.1 179.7 494.6 165.2 492.2 151.2 489.5 132.4 484.3 118.6 479.2 108 474 98.1 467.9 86.5 458.6 77.4 448.8 69.9 438 61.9 422.6 58 412.2 54.7 401.9 50.8 386.4 46.5 361.6 44.5 345.2 41.2 304 38.9 237 37.8 149.4 37.4 0 0 0 0 541ZM305.5 365.8L340.7 367.6 382 368.5 542 369.1 542 0 172.2 0 172.6 144.3 174.4 216.4 176 242.2 178.7 267.9 182.5 288.5 187 304 191 314 193.8 319.4 200.7 329.8 205.2 334.9 210.8 340.1 222 347.5 227.5 350.4 237.4 354.4 252.9 358.8 278.7 363.3 305.5 365.8Z"/><path fill="#00bfff" d="M0 541L542 541 542 504.9 397.5 504.5 309.7 503.5 247.8 501.6 201.3 498.4 175.5 495.4 160 492.7 144.7 489.5 127.4 484.3 114.5 479.2 104.4 474 92.9 466.4 83.8 458.6 74.8 448.3 67.8 438 61.9 426.7 56.8 413.9 51.6 396.6 48.4 381.3 45.7 365.8 43.2 345.2 41.3 324.9 39.8 298.8 37.6 231.9 36.6 144.3 36.2 0 0 0 0 541ZM483.9 365.8L542 365.9 542 0 175.5 0 176.3 164.9 177.6 211.2 180.1 247.3 181.9 262.8 184.4 278.2 189.8 298.8 196.3 314.3 201.3 322.5 206.5 329.1 212.3 334.9 218.9 340.1 232.3 347.5 242.6 351.6 252.9 354.6 263.3 356.9 278.7 359.5 309.7 362.5 351 364.5 402.6 365.4 483.9 365.8Z"/><path fill="#00cfff" d="M0 541L542 541 542 505.9 397.5 505.6 314.9 504.8 252.9 503 201.3 499.7 180.7 497.4 160 494.2 138.9 489.5 123.9 484.7 110.6 479.2 101.1 474 92.9 468.6 82.6 459.8 72.5 448.3 67.1 440.1 61.9 430.6 56.4 417.3 51.6 402.3 46.9 381.3 43.7 360.7 41.3 340.1 38.1 288.5 36.3 226.7 35.5 144.3 35.1 0 0 0 0 541ZM340.5 360.7L413 362.2 542 362.6 542 0 178.7 0 179.3 144.3 180.1 185.5 181.7 221.6 183.8 247.3 186.6 267.9 191.1 288.5 196.5 304 201.3 313.7 205 319.4 213.9 329.8 220 334.9 227.1 339.7 238.2 345.2 247.8 348.7 258.1 351.6 278.7 355.6 304.6 358.5 340.5 360.7Z"/><path fill="#00dfff" d="M0 541L542 541 542 507 387.1 506.5 299.4 505.5 242.6 503.7 191 499.9 155 494.6 134.2 489.6 123.9 486.3 108.4 479.8 98.1 474.2 90.5 468.9 82.6 462.2 74.4 453.4 67.1 443.3 61.9 434.2 56.7 422.5 51.6 407.6 46.5 386.4 41.3 351.8 37.7 304 35.5 242.2 34.5 154.6 34.1 0 0 0 0 541ZM312 355.5L345.8 357.4 387.1 358.5 542 359.3 542 0 182 0 182.6 139.1 183.4 180.3 184.6 211.2 186.5 237 188.9 257.6 192.7 278.2 197.2 293.7 201.3 303.8 204.1 309.1 211 319.4 215.6 324.6 221.2 329.8 232.3 337.3 237.7 340.1 247.8 344.2 263.3 348.7 283.9 352.5 312 355.5Z"/><path fill="#00efff" d="M0 541L542 541 542 508 392.3 507.6 304.6 506.7 244.5 504.9 196.2 501.6 179.4 499.8 160 496.8 148.6 494.6 128.8 489.5 114.6 484.3 103.2 479 92.9 472.6 81.8 463.7 72.3 453.4 67.1 446.2 61.9 437.6 55.2 422.5 51.5 412.2 46.5 392.7 42.6 371 40 350.4 36.2 298.8 34.5 242.2 33.5 154.6 33.1 0 0 0 0 541ZM411.4 355.5L542 356 542 0 185.3 0 186.1 149.4 187.2 190.6 189.2 226.7 192 252.5 196.2 275.1 201.9 293.7 206.5 303.8 209.5 309.1 217.3 319.4 222.6 324.6 232.3 331.8 237.6 334.9 247.8 339.5 258.1 343 268.4 345.7 294.2 350.1 320 352.5 361.3 354.5 411.4 355.5Z"/><path fill="#00ffff" d="M0 541L542 541 542 509 392.3 508.6 304.6 507.7 237.4 505.6 196.2 502.7 170.5 499.8 154.9 497.1 142.7 494.6 124.3 489.5 110.9 484.3 100.5 479.2 87.8 470.8 79.5 463.7 70.3 453.4 63.4 443.1 56.8 430.3 51.8 417.3 46.5 398.5 44 386.4 41.3 370.8 38.9 350.4 35.7 309.1 33.5 242.2 32.4 154.6 32 0 0 0 0 541ZM343.2 350.4L413 352.2 542 352.7 542 0 188.6 0 189.3 139.1 190.3 180.3 191.7 211.2 193.8 237 196.7 257.6 201.2 278.2 206.7 293.7 211.6 303.6 215.2 309.1 224.1 319.4 230.2 324.6 237.4 329.5 248.2 334.9 263.3 340.1 287 345.2 309.7 348 343.2 350.4Z"/><path fill="#10ffef" d="M0 541L542 541 542 510.1 397.5 509.7 309.7 508.8 242.6 506.9 196.2 503.8 170.3 500.9 154.9 498.3 137.4 494.6 120.2 489.5 107.5 484.3 97.5 479.2 87.8 472.7 77.4 463.9 68.4 453.4 61.9 443.7 56.8 433.7 51.6 421 46.5 403.8 42.7 386.4 40.2 371 37.2 345.2 34.2 298.8 32.3 231.9 31.4 144.3 31 0 0 0 0 541ZM318.8 345.2L351 347.2 392.3 348.5 542 349.4 542 0 191.9 0 192.5 128.8 193.4 170 194.6 200.9 196.5 226.7 199 247.3 202.8 267.9 207.4 283.4 214.3 298.8 221.2 309.1 225.8 314.3 231.4 319.4 242.6 327.1 258.1 334 273.6 338.5 294.2 342.4 318.8 345.2Z"/><path fill="#20ffdf" d="M0 541L542 541 542 511 392.3 510.6 309.7 509.8 247.8 508.1 195.8 504.9 175.5 502.6 154.9 499.6 134.2 495.1 118.7 490.3 104.3 484.3 94.8 479.2 87 474 77.4 465.9 70.6 458.6 61.9 446.4 56.8 436.9 50.8 422.5 46 407 41.5 386.4 38.4 365.8 36.1 345.6 33 293.7 31.2 231.9 30.4 149.4 30.1 0 0 0 0 541ZM398.6 345.2L542 346.1 542 0 195.3 0 196.2 143.2 197.4 185.5 199.3 216.4 202.1 242.2 206.5 265.5 212.1 283.4 216.8 293.7 219.8 298.8 227.1 308.7 232.3 313.9 242.6 321.6 247.8 324.6 258.1 329.3 273.6 334.3 294.2 338.5 320 341.6 356.2 344 398.6 345.2Z"/><path fill="#30ffcf" d="M0 541L542 541 542 511.8 387.1 511.5 299.4 510.6 237.4 508.6 191 505.5 170.3 503.1 149.7 499.8 123.9 493.3 112.8 489.5 98.1 482.6 87.8 476.2 77.4 467.9 68.8 458.6 61.9 449.1 56.8 439.9 51.3 427.6 46.2 412.2 41.3 391.6 36.1 356.1 32.7 309.1 30.6 247.3 29.6 154.6 29.2 0 0 0 0 541ZM348.6 340.1L418.1 342.1 542 342.8 542 0 198.6 0 199.3 128.8 200.3 170 201.8 200.9 204 226.7 206.8 247.3 211.4 267.9 216.9 283.4 222.1 293.7 227.1 301 232.3 307.1 242.6 315.9 248.1 319.4 258.1 324.5 273.6 330 294.2 334.6 320 337.9 348.6 340.1Z"/><path fill="#40ffbf" d="M0 541L542 541 542 512.7 387.1 512.4 299.4 511.5 242.6 509.9 191 506.5 175.5 504.9 154.9 501.8 144.1 499.8 123.8 494.6 109.4 489.5 98.1 484.2 87.8 477.9 76.4 468.9 67.1 458.8 61.9 451.6 56.8 442.9 50 427.6 46.4 417.3 41.3 397.2 37.7 376.1 35.1 355.5 31.4 304 29.7 247.3 28.7 154.6 28.3 0 0 0 0 541ZM327.3 334.9L361.3 337.1 402.6 338.4 542 339.4 542 0 202 0 202.7 123.7 204.8 190.6 206.7 216.4 209.2 237 213.1 257.6 217.6 273.1 224.6 288.5 231.5 298.8 236.1 304 241.7 309.1 252.9 316.8 268.4 323.8 283.9 328.3 304.6 332.2 327.3 334.9Z"/><path fill="#50ffaf" d="M0 541L542 541 542 513.6 387.1 513.3 299.4 512.3 232.3 510.3 191 507.4 168.1 504.9 149.7 501.9 138.9 499.8 120 494.6 106.2 489.5 95.7 484.3 87.2 479.2 74.5 468.9 65.3 458.6 58.4 448.3 51.6 435 46.9 422.5 42.5 407 39.2 391.6 36.1 373.2 34.1 355.5 31 314.3 28.8 247.3 27.8 154.6 27.4 0 0 0 0 541ZM400.4 334.9L454.2 335.7 542 336 542 0 205.4 0 206.2 128.8 207.4 170 209.1 200.9 211.6 226.8 216.1 252.5 220.5 267.9 227.1 283.4 232.3 291.7 237.4 298.2 242.6 303.5 247.8 307.7 252.9 311.2 263.3 316.8 278.7 322.5 299.4 327.4 325.2 330.9 356.2 333.3 400.4 334.9Z"/><path fill="#60ff9f" d="M0 541L542 541 542 514.5 392.3 514.2 304.6 513.3 237.4 511.4 191 508.4 165.2 505.5 149.7 503 134.1 499.8 116.3 494.6 103.2 489.5 92.9 484.3 82.6 477.5 72.5 468.9 63.7 458.6 56.8 448.3 51.6 438 46.5 424.9 41.3 407.1 38.1 391.6 35.6 376.1 33.2 355.5 31 329.9 29.9 309.1 27.8 242.2 26.9 154.6 26.5 0 0 0 0 541ZM357.8 329.8L423.3 331.8 542 332.6 542 0 208.8 0 209.6 123.7 210.5 159.7 212.1 190.6 214.3 216.4 217.2 237 221.8 257.6 227.3 273.1 232.6 283.4 237.4 290.5 242.6 296.5 252.9 305.4 258.7 309.1 268.4 314.1 283.9 319.6 304.6 324.2 330.4 327.7 357.8 329.8Z"/><path fill="#70ff8f" d="M0 541L542 541 542 515.4 392.3 515.1 304.6 514.2 237.4 512.3 191 509.4 170.3 507.1 149.7 504 129.8 499.8 113.6 494.9 100.4 489.5 90.6 484.3 82.6 479.1 72.3 470.3 62 458.6 56.8 450.5 51.6 440.8 46.2 427.6 41.3 411.5 37 391.6 32.2 355.5 29 309.1 27 242.2 26 149.4 25.7 0 0 0 0 541ZM338.2 324.6L366.5 326.6 407.8 328 542 329.1 542 0 212.3 0 213.1 118.5 214 154.6 215.4 185.5 217.6 211.2 220.4 231.9 223.6 247.3 228.2 262.8 232.3 272.7 235.2 278.2 242.2 288.5 246.8 293.7 252.4 298.8 263.3 306.2 268.8 309.1 278.7 313.3 294.2 317.9 314.9 321.8 338.2 324.6Z"/><path fill="#80ff80" d="M0 541L542 541 542 516.1 392.3 515.8 304.6 515.1 237.4 513.2 188.3 510.1 148.8 504.9 129 500.6 113.6 496 98.1 489.7 88.3 484.3 80.7 479.2 72.3 472.1 64.5 463.7 57.1 453.4 51.6 443.5 46.5 431.5 41.3 415.5 37 396.7 33.7 376.1 31.2 355.5 27.9 304 26 237 25.2 149.4 24.9 0 0 0 0 541ZM414 324.6L542 325.7 542 0 215.7 0 216.8 128.8 218.3 170 220.4 200.9 223.7 226.7 228 247.3 233.1 262.8 237.4 272.3 240.9 278.2 247.8 287.4 252.9 292.6 263.3 300.5 269.2 304 278.7 308.4 294.2 313.4 314.9 317.8 340.7 321 371.7 323.1 414 324.6Z"/><path fill="#8fff70" d="M0 541L542 541 542 516.9 387.1 516.6 294.2 515.7 232.3 513.8 185.8 510.7 165.2 508.3 144.5 505.1 118.7 498.8 106.6 494.6 92.9 488.3 82.6 482 72.3 473.8 67.1 468.6 59.1 458.6 52.8 448.3 47.9 438 40.7 417.3 36.1 397.7 34.2 386.4 31 362.1 29.1 340.1 27.3 309.1 25.8 269.5 24.6 175.2 24.1 0 0 0 0 541ZM372.1 319.4L433.6 321.4 542 322.1 542 0 219.3 0 220.2 118.5 221.3 154.6 223 185.5 225.5 211.2 228.8 231.9 232.6 247.3 238.2 262.8 242.6 271.5 246.9 278.2 256 288.5 262.1 293.7 268.4 297.9 280.4 304 289.1 307.2 299.4 310.3 319 314.3 340.7 317.1 372.1 319.4Z"/><path fill="#9fff60" d="M0 541L542 541 542 517.7 387.1 517.4 294.2 516.5 237.4 514.9 185.8 511.6 165.2 509.3 144.5 506 118.2 499.8 103.7 494.6 92.6 489.5 82.6 483.4 70.8 474 61.9 464.4 56.8 457.2 51.6 448.5 46.5 437.5 41.3 423 38.4 412.2 36 401.9 32.5 381.3 30 360.7 27.9 334.9 25.9 298.8 25 267.9 23.8 170 23.4 0 0 0 0 541ZM352.7 314.3L382 316.2 423.3 317.5 542 318.6 542 0 222.8 0 223.8 113.4 224.8 149.4 226.5 180.3 228.9 206.1 232.1 226.7 235.7 242.2 241.1 257.6 247.8 270.5 252.9 277.7 258 283.4 268.4 292 278.7 298 293.7 304 309.7 308.3 330.4 311.8 352.7 314.3Z"/><path fill="#afff50" d="M0 541L542 541 542 518.5 387.1 518.1 294.2 517.2 227.1 515.3 185.8 512.4 164.1 510.1 144.5 507 134.1 504.9 114.9 499.8 101 494.6 90.4 489.5 77.4 481.1 69.1 474 61.9 466.2 56.3 458.6 51.6 450.8 45.5 438 41.3 426.3 37.4 412.2 35.1 401.9 31.6 381.3 28.7 355.5 26.7 329.8 24.2 267.9 23 170 22.6 0 0 0 0 541ZM446.3 314.3L542 315 542 0 226.5 0 227.7 123.7 229 159.7 231.3 190.6 234.6 216.4 239 237 244.2 252.5 247.8 260.4 252.9 269.1 258.1 275.8 263.3 281.2 273.6 289.3 281.2 293.7 289.1 297.3 299.4 301 309.7 303.8 335.5 308.4 361.3 311.1 397.5 313.1 446.3 314.3Z"/><path fill="#bfff40" d="M0 541L542 541 542 519.2 387.1 518.9 299.4 518.1 232.3 516.2 185.8 513.2 160 510.4 144.5 507.9 129 504.7 111.7 499.8 98.3 494.6 87.8 489.3 77.4 482.5 67.5 474 61.9 468 55 458.6 49.1 448.3 44.5 438 40.7 427.6 36.4 412.2 31 383.5 28.3 360.7 25.8 329.8 23.5 267.9 22.2 170 21.8 0 0 0 0 541ZM394.5 309.1L454.2 310.7 542 311.3 542 0 230.1 0 231.2 113.4 232.4 149.4 234.3 180.3 237.2 206.1 241 226.7 245.4 242.2 252 257.6 258.4 267.9 263.3 273.8 268.4 278.9 274 283.4 282.2 288.5 289.1 292 299.4 296.1 314.9 300.4 335.5 304.2 361.3 307.1 394.5 309.1Z"/><path fill="#cfff30" d="M0 541L542 541 542 520 387.1 519.7 299.4 518.8 232.3 517 185.8 514.1 160 511.2 144.5 508.8 126 504.9 108.6 499.8 95.9 494.6 86 489.5 77.4 483.9 67.1 475.2 56.8 463.2 50.6 453.4 45.5 443.1 41.3 432.6 36.1 415.2 30.5 386.4 28 365.8 25.7 340.1 24.1 309.1 22.7 267.9 21.5 170 21 0 0 0 0 541ZM372.9 304L402.6 305.6 438.8 306.7 542 307.6 542 0 233.8 0 234.9 108.2 236.1 144.3 237.5 170 240.1 195.8 243.3 216.4 247.8 234.2 252.9 248.1 257.8 257.6 261.2 262.8 268.4 271.5 278.7 280.3 283.9 283.6 293.4 288.5 307.4 293.7 325.2 298.1 345.8 301.4 372.9 304Z"/><path fill="#dfff20" d="M0 541L542 541 542 520.7 382 520.4 299.4 519.6 232.3 517.7 185.8 514.9 146.7 510.1 123.9 505.3 113.6 502.3 98.1 496.7 87.8 491.6 76.2 484.3 67.1 476.7 59.9 468.9 52.4 458.6 46.7 448.3 42.3 438 35.7 417.3 32.3 401.9 29.7 386.4 26.6 360.7 25 340.1 23.3 309.1 22 267.9 20.7 170 20.3 0 0 0 0 541ZM360.6 298.8L392.3 301.2 428.4 302.6 542 303.8 542 0 237.6 0 238.6 103 239.8 139.1 241.2 164.9 243.7 190.6 246.9 211.2 250.5 226.7 255.8 242.2 260.9 252.5 268.4 263.4 278.1 273.1 289.1 280.6 294.3 283.4 304.6 287.7 320 292.3 340.7 296.3 360.6 298.8Z"/><path fill="#efff10" d="M0 541L542 541 542 521.4 387.1 521.1 299.4 520.4 232.3 518.5 180.7 515.2 141.8 510.1 118.8 504.9 108.4 501.6 92.9 495.4 82.6 489.9 74.4 484.3 67.1 478.2 58.5 468.9 51.6 459.2 46.5 449.9 41.3 438.2 34.9 417.3 31 399.5 28.9 386.4 25.8 360.8 24.2 340.1 22.5 309.1 21.2 267.9 20 175.2 19.6 0 0 0 0 541ZM435.8 298.8L542 300 542 0 241.5 0 242.8 113.4 244.3 149.4 246.8 180.3 249.6 200.9 254 221.6 259.2 237 263.3 245.9 267.1 252.5 275.1 262.8 280.4 267.9 289.1 274.4 295.7 278.2 304.6 282.3 320 287.5 340.7 291.9 366.5 295.2 397.5 297.4 435.8 298.8Z"/><path fill="#ffff00" d="M0 541L542 541 542 522.1 382 521.7 289.1 520.9 227.1 519 180.7 516 160 513.7 139.4 510.5 113.6 504.3 100.5 499.8 87.8 493.9 77.4 487.7 66.6 479.2 57.1 468.9 51.6 461.1 46.5 452.1 41.3 440.7 36.1 425.6 32.8 412.2 30.6 401.9 27.4 381.3 25.1 360.7 23.1 334.9 20.6 273.1 19.4 175.2 19 0 0 0 0 541ZM404.4 293.7L459.4 295.4 542 296.1 542 0 245.4 0 246.7 108.2 248.1 144.3 250.1 170 252.9 193.6 256.3 211.2 260.7 226.7 267.3 242.2 273.7 252.5 278.7 258.5 283.9 263.6 294.2 271.2 299.4 274.2 309.7 278.9 325.2 283.9 348 288.5 371.7 291.4 404.4 293.7Z"/><path fill="#ffef00" d="M0 541L542 541 542 522.7 382 522.4 289.1 521.5 232.3 520 180.7 516.7 160 514.5 139.4 511.3 129 509.2 112.5 504.9 98.1 499.8 86.9 494.6 77.4 489 65.2 479.2 56.8 470 51.6 462.9 46.5 454.2 41.2 443.1 36.1 428.7 31.9 412.2 26.6 381.3 24.3 360.7 22.1 329.8 19.8 267.9 18.7 170 18.3 0 0 0 0 541ZM388.6 288.5L418.1 290.2 449.1 291.1 542 292.1 542 0 249.3 0 250.6 103 252 139.1 253.9 164.9 256.3 185.5 260 206.1 264.3 221.6 270.7 237 276.9 247.3 285.8 257.6 291.8 262.8 299.3 267.9 309.7 273.3 325.2 278.8 340.7 282.6 361.3 285.9 388.6 288.5Z"/><path fill="#ffdf00" d="M0 541L542 541 542 523.4 382 523.1 289.1 522.2 224.6 520.4 180.7 517.4 159.6 515.2 139.4 512.1 129 510.1 109.6 504.9 95.6 499.8 84.9 494.6 72.3 486.5 63.7 479.2 56.8 471.6 51 463.7 45 453.4 40.3 443.1 36.1 431.6 31 412.2 25.8 381.7 23.2 355.5 21.3 329.8 19.1 267.9 18 170 17.6 0 0 0 0 541ZM379.3 283.4L407.8 285.4 438.8 286.7 542 288.1 542 0 253.4 0 254.5 92.7 255.8 128.8 257.4 154.6 259.5 175.2 262.8 195.8 266.4 211.2 271.8 226.7 278.7 239.9 283.9 247.1 288.7 252.5 299.4 261.3 309.7 267.3 323.9 273.1 340.7 277.7 356.2 280.5 379.3 283.4Z"/><path fill="#ffcf00" d="M0 541L542 541 542 524.1 387.1 523.8 294.2 522.9 227.1 521.2 180.7 518.2 154.9 515.4 139.4 512.9 123.9 509.7 106.8 504.9 93.3 499.8 82.6 494.4 72.3 487.7 62.3 479.2 56.8 473.2 49.9 463.7 44 453.4 39.4 443.1 35.6 432.8 31 415.9 25.7 386.4 22.9 360.7 20.9 334.9 18.6 273.1 17.4 175.2 17 0 0 0 0 541ZM476.5 283.4L542 284 542 0 257.5 0 258 61.8 259.2 108.2 261.1 144.3 263.5 170 266.7 190.6 271.8 211.2 275.6 221.6 278.7 228.5 283.7 237 287.4 242.2 291.9 247.3 297.4 252.5 304.2 257.6 309.7 261 325.2 268 345.8 273.8 371.7 278 397.5 280.4 433.6 282.3 476.5 283.4Z"/><path fill="#ffbf00" d="M0 541L542 541 542 524.7 387.1 524.4 294.2 523.6 227.1 521.8 180.7 518.9 154.9 516.1 139.4 513.7 121.9 510.1 104.1 504.9 91.1 499.8 81.1 494.6 72.3 488.9 61.9 480.2 56.2 474 48.7 463.7 42.9 453.4 38.4 443.1 34.8 432.8 31 419.4 27.4 401.9 25 386.4 22.6 365.8 20.5 340.1 17.9 273.1 16.7 175.2 16.3 0 0 0 0 541ZM440.7 278.2L542 279.8 542 0 261.7 0 263.1 97.9 264.8 134 267 159.7 269.8 180.3 274.2 200.9 279.4 216.4 283.9 226.1 287.3 231.9 295.2 242.2 300.5 247.3 307.1 252.5 320 259.9 335.5 265.8 356.2 270.8 376.8 273.9 407.8 276.6 440.7 278.2Z"/><path fill="#ffaf00" d="M0 541L542 541 542 525.4 387.1 525.1 294.2 524.3 227.1 522.5 180.7 519.6 160 517.4 139.4 514.5 118.7 510.1 103.2 505.5 89 499.8 79.3 494.6 71.5 489.5 61.9 481.4 55.1 474 47.6 463.7 41.9 453.4 37.5 443.1 30.9 422.5 26.6 401.9 24.2 386.4 21.4 360.7 19.9 340.1 17.1 267.9 16 170 15.6 0 0 0 0 541ZM424.1 273.1L474.9 274.7 542 275.5 542 0 266 0 267.6 97.9 269.1 128.8 271.2 154.6 274 175.2 278.3 195.8 283.3 211.2 289.1 223.3 294.6 231.9 299.4 237.7 304.6 242.8 314.9 250.5 320 253.4 330.4 258.2 345.8 263.2 368.8 267.9 392.3 270.8 424.1 273.1Z"/><path fill="#ff9f00" d="M0 541L542 541 542 526 382 525.7 294.2 524.9 232.3 523.3 180.7 520.4 160 518.2 139.3 515.2 118.7 510.9 108.4 508 98.1 504.5 82.6 497.5 72.3 491.1 61.9 482.7 53.9 474 46.5 463.7 41.3 454.2 36.5 443.1 31.5 427.6 28.9 417.3 25.8 402 23.5 386.4 20.7 360.7 19.2 340.1 16.5 267.9 15.4 180.3 15 0 0 0 0 541ZM415.2 267.9L464.6 270 542 271.1 542 0 270.4 0 271.8 87.6 273.1 118.5 275 144.3 277.4 164.9 281.2 185.5 285.6 200.9 292.1 216.4 299.4 228 307.5 237 313.6 242.2 320 246.5 331.6 252.5 345.9 257.6 366.5 262.4 387.1 265.4 415.2 267.9Z"/><path fill="#ff8f00" d="M0 541L542 541 542 526.6 382 526.3 290.7 525.5 227.1 523.8 175.5 520.6 154.9 518.2 135.1 515.2 108.4 508.9 96.8 504.9 82.6 498.5 72.3 492.2 61.9 484 52.7 474 46.5 465.3 41.3 456.1 36.1 444.4 31 428.7 28.2 417.3 25.8 406.1 22.8 386.4 20.6 367.8 18.6 340.1 15.8 267.9 14.8 175.2 14.4 0 0 0 0 541ZM410.3 262.8L464.6 265.4 542 266.6 542 0 274.9 0 276.4 87.6 277.8 118.5 279.9 144.3 282.6 164.9 286.8 185.5 291.7 200.9 296.3 211.2 302.5 221.6 311.3 231.9 320 239.1 325.2 242.5 334.6 247.3 348.3 252.5 366.5 257.1 387.1 260.4 410.3 262.8Z"/><path fill="#ff8000" d="M0 541L542 541 542 527.2 376.8 526.9 283.9 526 222 524.2 175.5 521.2 154.9 518.9 134.2 515.8 108.4 509.7 94.6 504.9 82.6 499.5 72.3 493.3 61 484.3 51.6 474.2 46.5 466.9 41.3 458 36.1 446.6 31 431.6 27.4 417.3 24.4 401.9 21.4 381.3 19.4 360.7 17.6 334.9 15.2 267.9 14.2 170 13.8 0 0 0 0 541ZM408.2 257.6L459.4 260.6 542 262 542 0 279.5 0 281 82.4 282.4 113.4 284.5 139.1 287.1 159.7 290.1 175.2 294.3 190.6 300.6 206.1 306.7 216.4 315.3 226.7 325.2 234.9 338 242.2 351 247.3 366.5 251.5 387.1 255.2 408.2 257.6Z"/><path fill="#ff7000" d="M0 541L542 541 542 527.8 376.8 527.5 283.9 526.6 227.1 525.1 175.5 521.8 154.9 519.7 134.2 516.5 123.9 514.4 107 510.1 92.4 504.9 81.4 499.8 72.3 494.4 59.7 484.3 51.6 475.5 46.5 468.5 41.3 459.8 35.9 448.3 31 434.2 26.6 417.3 23.7 401.9 20.7 381.3 18.3 355.5 16.7 329.8 14.6 267.9 13.6 170 13.2 0 0 0 0 541ZM408.2 252.5L433.6 254.5 459.4 255.7 542 257.3 542 0 284.2 0 285.8 82.4 287.1 108.2 289.1 134 291.8 154.6 294.7 170 299.4 187.1 305.1 200.9 311.1 211.2 320 222 330.4 230.5 340.7 236.5 354.5 242.2 371.7 246.9 387.1 249.8 408.2 252.5Z"/><path fill="#ff6000" d="M0 541L542 541 542 528.4 382 528.1 289.1 527.3 222.6 525.5 175.5 522.5 155.1 520.4 134.2 517.2 123.9 515.2 104.4 510.1 90.3 504.9 79.6 499.8 67.1 491.7 58.4 484.3 51.6 476.9 45.7 468.9 39.8 458.6 35.1 448.3 31 436.8 25.8 417.3 20.6 386.2 18.1 360.7 16.3 334.9 14.1 273.1 13 175.2 12.7 0 0 0 0 541ZM409.9 247.3L433.6 249.3 464.6 250.9 542 252.5 542 0 289.1 0 290.6 77.3 292.2 108.2 294.2 131.8 297.4 154.6 300.7 170 304.6 183.2 309.8 195.8 315.7 206.1 324.2 216.4 329.8 221.6 335.5 225.8 345.8 231.8 358.5 237 371.7 240.9 387.1 244.1 409.9 247.3Z"/><path fill="#ff5000" d="M0 541L542 541 542 529 382 528.7 289.1 527.9 222 526.1 175.5 523.1 149.9 520.4 134.2 517.9 118.7 514.7 101.9 510.1 88.3 504.9 77.4 499.5 67.1 492.8 57.2 484.3 51.6 478.3 44.7 468.9 38.9 458.6 34.3 448.3 30.6 438 25.8 420.4 22.3 401.9 20 386.4 17.5 360.7 15.7 334.9 13.6 273.1 12.4 175.2 12.1 0 0 0 0 541ZM528 247.3L542 247.5 542 0 294.1 0 294.9 51.5 296.3 87.6 298.4 118.5 301.5 144.3 305.6 164.9 308.5 175.2 312.3 185.5 314.9 191.1 320 200.1 329 211.2 334.5 216.4 340.7 221 350.6 226.7 356.2 229.2 371.7 234.6 392.3 239.2 413.1 242.2 443.9 244.7 480.1 246.3 528 247.3Z"/><path fill="#ff4000" d="M0 541L542 541 542 529.5 382 529.2 289.1 528.4 222 526.7 175.5 523.8 149.7 521 134.2 518.6 117.7 515.2 99.6 510.1 86.4 504.9 76.3 499.8 67.1 493.8 56.8 485.1 47.2 474 41.3 464.9 36.1 454.7 31.5 443.1 26.9 427.6 24.5 417.3 19.4 386.4 15.3 340.1 13 273.1 11.8 175.2 11.5 0 0 0 0 541ZM528.1 242.2L542 242.3 542 0 299.2 0 300.2 51.5 301.6 87.6 304 118.5 307.4 144.3 312.1 164.9 317.4 180.3 320 186.1 325.2 195.1 334.1 206.1 339.6 211.2 345.8 215.9 356.2 221.8 371.7 228 392.3 233.2 417.7 237 443.9 239.3 480.1 241.1 528.1 242.2Z"/><path fill="#ff3000" d="M0 541L542 541 542 530.1 382 529.8 289.1 529 222 527.2 175.5 524.4 149.7 521.6 134.2 519.3 114.7 515.2 98.1 510.4 84.6 504.9 74.7 499.8 66.8 494.6 56.8 486.2 46.5 474.4 41.3 466.4 36.1 456.6 31 443.9 26.1 427.6 23.8 417.3 20.6 400.4 18.8 386.4 16.2 360.7 14.8 340.1 12.3 267.9 11.2 170 10.9 0 0 0 0 541ZM539.9 237L542 237 542 0 304.5 0 305.6 51.5 307.2 87.6 309.7 117.9 312.7 139.1 317.4 159.7 322.8 175.2 325.2 180.6 330.4 189.6 334.9 195.8 339.4 200.9 345 206.1 351 210.6 361.1 216.4 366.5 218.8 382 224.2 402.6 228.8 423.9 231.9 454.2 234.4 490.4 236 539.9 237Z"/><path fill="#ff2000" d="M0 541L542 541 542 530.7 382 530.4 289.1 529.6 222 527.8 175.5 525 136.7 520.4 118.7 516.8 103.2 512.7 87.8 507.1 77.4 502.2 65.4 494.6 56.8 487.4 49.2 479.2 41.8 468.9 36.1 458.4 31 446 25.8 429.3 23.1 417.3 20.2 401.9 17.6 381.3 15.5 360 13.9 334.9 11.6 262.8 10.6 170 10.3 0 0 0 0 541ZM431.8 226.7L474.9 229.8 542 231.6 542 0 310 0 311.8 67 313.3 92.7 315.2 113.4 318.2 134 321.5 149.4 325.2 162 330.7 175.2 336.7 185.5 345.1 195.8 350.8 200.9 356.2 204.9 366.5 210.9 379.7 216.4 392.3 220.1 407.8 223.4 431.8 226.7Z"/><path fill="#ff1000" d="M0 541L542 541 542 531.2 376.8 531 289.1 530.2 222 528.4 174.1 525.5 154.9 523.5 132.9 520.4 113.6 516.3 103.2 513.5 92.9 510.1 77.4 503.1 67.1 496.8 56.8 488.5 48.1 479.2 41.3 469.5 36.1 460.1 31 448.2 25.8 432 22.4 417.3 19.6 401.9 16.9 381.3 15 360.7 13.1 329.8 11 262.8 10.1 175.2 9.8 0 0 0 0 541ZM441.7 221.6L485.2 224.4 542 225.9 542 0 315.7 0 317.7 67 319.4 92.7 321.5 113.4 324.9 134 328.6 149.4 334.1 164.9 339.3 175.2 346.5 185.5 356.2 195.1 364.3 200.9 373.7 206.1 387.1 211.4 402.6 215.6 418.1 218.6 441.7 221.6Z"/><path fill="#ff0000" d="M0 541L542 541 542 531.7 382 531.5 289.1 530.8 222 529 170.3 525.8 149.7 523.5 129.2 520.4 103.2 514.2 91 510.1 77.4 503.9 67.1 497.7 56.6 489.5 47.1 479.2 41.3 470.9 36.1 461.8 31 450.2 25.8 434.6 21.7 417.3 19 401.9 16.3 381.3 14.4 360.7 12.5 329.8 10.4 262.8 9.6 170 9.3 0 0 0 0 541ZM454.5 216.4L490.4 218.6 542 220 542 0 321.6 0 323.8 67 325.7 92.7 328.1 113.4 330.8 128.8 335.5 147.2 340.2 159.7 345.8 170.6 352.9 180.3 361.3 188.7 371.1 195.8 382 201.4 397.5 207 413 210.8 433.6 214.2 454.5 216.4Z"/><path fill="#ef0000" d="M0 541L542 541 542 532.3 376.8 532 278.7 531.2 216.8 529.3 165.2 525.9 144.5 523.4 125.8 520.4 108.4 516.4 98.1 513.3 89 510.1 77.4 504.8 67.1 498.7 55.5 489.5 46.5 479.6 41.3 472.4 36.1 463.5 29.5 448.3 25.8 437 21 417.3 15.7 381.3 11.9 329.8 9.9 267.9 9.1 170 8.8 0 0 0 0 541ZM471.7 211.2L500.7 212.8 542 213.9 542 0 327.7 0 328.7 36.1 330.2 67 332.3 92.7 335.1 113.4 338.2 128.8 342.6 144.3 349.2 159.7 355.5 170 364.7 180.3 371.7 186.1 382 192.5 397.5 199.1 413 203.5 428.4 206.5 449.1 209.3 471.7 211.2Z"/><path fill="#df0000" d="M0 541L542 541 542 532.8 376.8 532.5 273.6 531.7 211.6 529.6 165.2 526.5 144.5 524 123.9 520.7 98.1 514 87.1 510.1 76.1 504.9 67.1 499.6 60.3 494.6 54.4 489.5 46.5 480.8 41.3 473.8 35.5 463.7 28.8 448.3 25.4 438 20.3 417.3 15 381.3 11.6 334.9 9.4 273.1 8.5 170 8.2 0 0 0 0 541ZM496.8 206.1L542 207.5 542 0 334.1 0 336.5 61.8 338.7 87.6 341.5 108.2 345.8 128.3 351 143.9 356.2 154.9 362.6 164.9 371.7 174.8 382 182.6 392.3 188.2 407.8 194.1 423.3 198.1 443.9 201.7 469.7 204.4 496.8 206.1Z"/><path fill="#cf0000" d="M0 541L542 541 542 533.3 376.8 533 263.3 532.1 206.5 530 160 526.7 123.9 521.4 103.2 516.3 92.9 513 82.6 508.9 72.3 503.6 61.9 496.8 53.3 489.5 46.5 482 40.6 474 34.7 463.7 28.1 448.3 24.7 438 19.7 417.3 14.3 381.3 11.1 334.9 8.9 278.2 8 164.9 7.7 0 0 0 0 541ZM455.1 195.8L490.4 198.9 542 200.9 542 0 340.7 0 343.1 56.7 344.8 77.3 347.4 97.9 350.3 113.4 354.4 128.8 358.2 139.1 363.3 149.4 370.2 159.7 376.8 167 387 175.2 395.9 180.3 407.8 185.5 423.3 190.1 438.8 193.4 455.1 195.8Z"/><path fill="#bf0000" d="M0 541L542 541 542 533.8 376.8 533.5 258.1 532.6 222 531.5 160 527.4 123.9 522.1 98.1 515.6 83.6 510.1 72.3 504.5 61.9 497.8 52.2 489.5 43.3 479.2 36.6 468.9 31.4 458.6 27.4 448.3 25.5 443.1 20 422.5 14.1 386.4 9.5 319.4 8.4 283.4 7.5 164.9 7.2 0 0 0 0 541ZM477.2 190.6L505.9 192.6 542 194 542 0 347.7 0 350.3 56.7 352.3 77.3 355.4 97.9 358.7 113.4 363.6 128.8 368.2 139.1 374.4 149.4 382 158.6 389 164.9 397.5 170.7 406.1 175.2 413 178 423.3 181.5 439.6 185.5 459.4 188.7 477.2 190.6Z"/><path fill="#af0000" d="M0 541L542 541 542 534.3 376.8 534 247.8 533.1 211.6 531.9 154.9 527.6 118.7 522 98.1 516.5 82.6 510.6 72.3 505.5 61.9 498.7 51.6 490 42.4 479.2 35.6 468.9 30.4 458.6 24.5 443.1 19.1 422.5 13.4 386.4 9.2 329.8 7.9 293.7 7 164.9 6.7 0 0 0 0 541ZM511.8 185.5L542 186.7 542 0 355 0 356.2 30.9 358 56.7 360.3 77.3 363.9 97.9 367.8 113.4 373.7 128.8 379.3 139.1 387.1 149.4 397.5 158.8 406.8 164.9 418.1 170.2 433 175.2 449.1 178.8 464.6 181.3 485.2 183.6 511.8 185.5Z"/><path fill="#9f0000" d="M0 541L542 541 542 534.8 382 534.6 237.4 533.6 206.5 532.6 190.2 530.7 149.7 528 144.5 527.3 138.1 525.5 118.7 522.9 113.6 521.6 111.1 520.4 98.1 517.5 87.8 513.2 82.6 511.8 80.2 510.1 72.3 506.6 56.8 496 51.6 491.2 45.1 484.3 41.3 479 34.4 468.9 31 460.9 29.3 458.6 27.9 453.4 23.5 443.1 20.6 430.1 19.4 427.6 18.2 422.5 15.5 403.1 13.7 396.7 13 391.6 10.3 351.2 8.4 334.9 7.4 304 6.4 159.7 6.2 0 0 0 0 541ZM482.3 175.2L511 177.6 542 179 542 0 362.6 0 363.8 25.8 365.7 51.5 368.1 72.1 370.7 87.6 374.4 103 377.8 113.4 382.3 123.7 388.3 134 396.8 144.3 402.6 149.6 413 156.7 423.3 161.8 433.6 165.7 449.1 169.9 464.6 172.8 482.3 175.2Z"/><path fill="#8f0000" d="M0 541L542 541 542 535.4 258.1 534.6 216.8 534 196.2 533 185.8 531.7 182.2 530.7 144.5 528.4 139.4 527.6 134.3 525.5 113.6 522.9 108.4 520.4 103.2 519 98.1 518.5 92.9 516.8 91.2 515.2 87.8 513.9 82.6 512.9 78.6 510.1 72.3 507.8 68.8 504.9 61.9 501.3 51.6 492.3 43.8 484.3 39.8 479.2 36.1 472.3 33.3 468.9 31 462.6 28.1 458.6 27.1 453.4 25.8 449.9 24.2 448.3 22.6 443.1 22 438 20.6 432.8 18.1 427.6 15.5 406.9 13.4 401.9 12.6 396.7 10.3 359.1 9.3 355.5 8 345.2 6.8 314.3 5.6 0 0 0 0 541ZM523 170L542 170.9 542 0 370.7 0 372.1 25.8 374.3 51.5 377.1 72.1 380.3 87.6 384.8 103 388.9 113.4 394.5 123.7 402.2 134 407.4 139.1 413 143.7 421.8 149.4 432.5 154.6 443.9 158.7 459.4 162.6 474.9 165.4 495.5 167.9 523 170Z"/></g><path d="M542 475.7L428.4 475.2 349.6 474 299.4 471.9 257.5 468.9 222 463.7 201.1 458.6 187.1 453.4 177.2 448.3 170.3 443.1 166.2 438 166 432.8 170.3 430.5 175.5 429.2 185.8 428.3 196.2 428 397.5 426.3 542 425.7M115.6 0L115 144.3 113.2 345.2 113 355.5 112 365.8 110.7 371 108.4 375.3 103.2 375.1 98.1 371.1 92.9 364.1 87.8 354.3 82.6 340.3 77.4 319.4 72.3 284 69.2 242.2 67.1 192.1 65.9 113.4 65.4 0" stroke="#0000af" stroke-width="1" fill="none" shape-rendering="crispEdges"/><path d="M542 493.4L402.6 492.9 314.9 491.8 251.6 489.5 206.5 485.6 191 483.5 167.3 479.2 148.3 474 134.4 468.9 123.5 463.7 113.6 457.8 103.2 450.1 95.8 443.1 87.8 433.9 80.2 422.5 77.2 417.3 72.3 407 68.5 396.7 65.2 386.4 61.3 371 56.8 345.4 55 329.8 51.5 288.5 49.2 221.6 48.1 134 47.6 0M147 0L147.4 195.8 148.5 242.2 150.6 278.2 152.2 293.7 154.5 309.1 156.7 319.4 159.5 329.8 163.4 340.1 165.8 345.2 170.3 352.9 176.4 360.7 181.7 365.8 191 372.6 197.4 376.1 206.5 380 216.8 383.3 227.1 385.8 242.6 388.4 258.1 390.2 294.2 392.6 340.7 393.8 407.8 394.3 542 394.3" stroke="#0030ff" stroke-width="1" fill="none" shape-rendering="crispEdges"/><path d="M542 503.9L392.3 503.5 304.6 502.4 237.4 500.1 196.2 496.8 177.9 494.6 154.9 490.5 144.5 488.1 129 483.5 117.9 479.2 103.2 471.6 91.9 463.7 82.6 455.1 77.4 449.3 72.8 443.1 67.1 433.8 61.9 423.3 56.8 409.8 51.6 391.3 48.6 376.1 46.5 363.4 43.8 340.1 40.7 298.8 38.6 231.9 37.6 144.3 37.2 0M172.8 0L172.9 108.2 173.6 170 175 216.4 177.6 252.5 179.4 267.9 182.1 283.4 184.6 293.7 187.8 304 192.1 314.3 196.2 321.8 201.3 329.2 206.4 334.9 212.2 340.1 219.6 345.2 227.1 349.3 237.4 353.6 247.8 356.8 258.1 359.2 273.6 361.9 289.1 363.8 325.2 366.3 371.7 367.7 433.6 368.4 542 368.6" stroke="#00afff" stroke-width="1" fill="none" shape-rendering="crispEdges"/><path d="M542 511.7L387.1 511.3 294.2 510.3 232.3 508.2 187 504.9 150.8 499.8 129 494.7 118.7 491.4 103.2 485 92.9 479.4 85.1 474 77.4 467.5 69.1 458.6 61.9 448.6 56.8 439.4 51.6 427.6 46.4 412.2 41.5 391.6 39 376.1 36.1 354.3 32.9 309.1 30.7 247.3 29.7 154.6 29.4 0M198 0L198.3 92.7 199.1 149.4 200.8 195.8 203.3 226.7 205.3 242.2 208.1 257.6 210.6 267.9 214 278.2 218.4 288.5 222 295 227.1 302.5 232.3 308.4 239 314.3 246.4 319.4 252.9 323 263.3 327.4 273.6 330.7 283.9 333.3 299.4 336.1 314.9 338.1 345.8 340.6 392.3 342.3 449.1 343.1 542 343.4" stroke="#20ffdf" stroke-width="1" fill="none" shape-rendering="crispEdges"/><path d="M542 518L387.1 517.7 294.2 516.8 236.3 515.2 185.8 511.9 167.9 510.1 144.5 506.5 134.2 504.4 116.7 499.8 102.5 494.6 91.6 489.5 82.6 484.1 75.9 479.2 70.1 474 61.9 465.2 53.8 453.4 46.5 438.7 42.3 427.6 39.3 417.3 35.6 401.9 32.1 381.3 29.6 360.7 27.5 334.9 26 309.1 24.3 252.5 23.4 159.7 23 0M224.5 0L224.9 77.3 225.8 128.8 227.5 170 230.1 200.9 234.1 226.7 236.4 237 239.5 247.3 243.5 257.6 247.8 266.1 252.3 273.1 258.1 280.1 267.6 288.5 273.6 292.6 278.7 295.5 289.1 300.1 299.4 303.6 309.7 306.2 320 308.3 335.5 310.7 366.5 313.6 407.8 315.5 459.4 316.5 542 316.9" stroke="#9fff60" stroke-width="1" fill="none" shape-rendering="crispEdges"/><path d="M542 523.5L387.1 523.2 294.2 522.3 227.1 520.6 180.7 517.5 159 515.2 139.4 512.1 128.7 510.1 109.3 504.9 95.4 499.8 84.8 494.6 72.3 486.6 63.6 479.2 54.5 468.9 47.7 458.6 41.3 445.8 36.4 432.8 32.1 417.3 28.9 401.9 25.8 382.3 24 365.8 20.6 318.2 18.8 252.5 17.9 159.7 17.6 0M253.7 0L254.3 67 255.5 113.4 257.4 149.4 260.6 180.3 264.3 200.9 266.9 211.2 270.3 221.6 274.8 231.9 278.7 239 283.9 246.3 289.1 252.1 295.3 257.6 302.6 262.8 309.7 266.7 320 271.2 330.4 274.6 340.7 277.2 361.3 280.9 392.3 284.1 428.4 286 474.9 287.1 542 287.7" stroke="#ffdf00" stroke-width="1" fill="none" shape-rendering="crispEdges"/><path d="M542 528.2L382 527.9 289.1 527.1 226.6 525.5 175.5 522.3 154.9 520.2 134.2 517 123.9 515 105.1 510.1 90.9 504.9 80.1 499.8 72.3 495.1 67.1 491.4 58.8 484.3 49.7 474 42.8 463.7 36.1 450.3 31.6 438 27.3 422.5 25 412.2 21.6 391.6 19.2 371 17.1 345.2 15.7 319.4 14 257.6 13.1 164.9 12.8 0M287.7 0L288.5 51.5 289.9 92.7 292 123.7 295 149.4 299 170 304.6 188.2 309.7 199.6 313.5 206.1 321.5 216.4 326.9 221.6 333.5 226.7 345.8 233.8 356.2 238 366.5 241.2 387.1 245.7 413 249.1 443.9 251.4 485.2 252.9 542 253.8" stroke="#ff7000" stroke-width="1" fill="none" shape-rendering="crispEdges"/><path d="M542 532.5L376.8 532.2 278.7 531.4 216.8 529.5 165.2 526.1 144.5 523.6 124.6 520.4 108.4 516.6 98.1 513.6 87.8 509.8 77.1 504.9 67.1 499 61.1 494.6 55.1 489.5 46.5 480.1 41.3 472.9 36 463.7 29.3 448.3 25.8 437.9 20.6 416.7 17.4 396.7 14.9 376.1 11.5 324.6 9.6 262.8 8.8 164.9 8.6 0M330 0L331.2 41.2 333.3 77.3 336.1 103 339.7 123.7 343.9 139.1 349.9 154.6 356.2 165.5 361.3 172.2 366.5 177.7 376.8 185.9 385 190.6 392.3 194 407.8 199.3 423.3 202.9 443.9 206.2 469.7 208.7 500.7 210.4 542 211.6" stroke="#ef0000" stroke-width="1" fill="none" shape-rendering="crispEdges"/><path d="M542 541L335.5 541 330.4 535.8 170.3 535.8 165.2 530.7 129 530.7 123.9 525.5 108.4 525.5 103.2 520.4 87.8 520.4 82.6 515.2 77.4 515.2 72.3 510.1 67.1 510.1 51.6 494.6 31 474 31 468.9 25.8 463.7 25.8 458.6 20.7 453.4 20.6 438 15.5 432.8 15.5 417.3 10.3 412.2 10.3 376.1 5.2 371 5.2 211.2 0 206.1 0 0M392.3 0L392.3 41.2 397.5 46.4 397.5 67 402.6 72.1 402.6 87.6 407.8 92.7 407.8 97.9 412.9 103 413 108.2 423.3 118.5 433.6 128.8 438.8 128.8 443.9 134 449.1 134 454.2 139.1 469.7 139.1 474.9 144.3 495.5 144.3 500.7 149.4 542 149.4" stroke="#800000" stroke-width="1" fill="none" shape-rendering="crispEdges"/><path d="M0.5 541V536M0 541.5H5M51.5 541V536M0 489.5H5M103.5 541V536M0 437.5H5M154.5 541V536M0 386.5H5M206.5 541V536M0 334.5H5M258.5 541V536M0 283.5H5M309.5 541V536M0 231.5H5M361.5 541V536M0 180.5H5M412.5 541V536M0 128.5H5M464.5 541V536M0 77.5H5M516.5 541V536M0 25.5H5" stroke="#262626" stroke-width="1" fill="none"/><path d="M91.8 0.0C91.6 2.0 91.0 7.0 90.4 11.8C89.8 16.6 88.9 23.0 87.9 28.6C86.9 34.2 85.2 39.8 84.5 45.4C83.8 51.0 83.7 56.6 83.7 62.2C83.7 67.8 83.9 72.6 84.5 79.0C85.1 85.4 86.7 94.9 87.6 100.9C88.5 106.9 89.1 109.7 89.9 114.8C90.6 119.9 91.7 127.1 92.1 131.6C92.5 136.1 92.5 137.5 92.4 141.7C92.3 145.9 92.1 151.5 91.3 156.8C90.6 162.1 88.9 168.0 87.9 173.6C86.9 179.2 86.0 185.1 85.4 190.4C84.8 195.7 84.6 201.0 84.5 205.6C84.4 210.2 84.1 213.0 84.5 217.8C84.9 222.6 86.1 229.0 87.1 234.6C88.1 240.2 89.3 245.8 90.4 251.4C91.5 257.0 93.1 263.1 93.8 268.2C94.5 273.2 94.6 277.2 94.6 281.7C94.6 286.2 94.2 290.6 93.8 295.1C93.4 299.6 92.7 304.5 92.1 308.6C91.5 312.7 90.8 315.1 90.4 319.8C90.0 324.5 89.4 331.1 89.8 336.7C90.2 342.3 91.1 347.9 92.9 353.5C94.7 359.1 97.5 365.2 100.4 370.3C103.3 375.4 107.3 379.3 110.5 383.8C113.7 388.3 117.2 393.6 119.8 397.2C122.4 400.8 124.3 403.8 125.8 405.6C127.3 407.4 128.3 407.6 128.8 408.0" stroke="#000" stroke-width="5.5" fill="none" stroke-linejoin="round" stroke-linecap="square" shape-rendering="crispEdges"/></svg><div class="xt" style="left:314.0px;top:616px">0.4</div><div class="yt" style="top:603.0px">0.4</div><div class="xt" style="left:365.6px;top:616px">0.6</div><div class="yt" style="top:551.5px">0.6</div><div class="xt" style="left:417.2px;top:616px">0.8</div><div class="yt" style="top:500.0px">0.8</div><div class="xt" style="left:468.9px;top:616px">1</div><div class="yt" style="top:448.4px">1</div><div class="xt" style="left:520.5px;top:616px">1.2</div><div class="yt" style="top:396.9px">1.2</div><div class="xt" style="left:572.1px;top:616px">1.4</div><div class="yt" style="top:345.4px">1.4</div><div class="xt" style="left:623.7px;top:616px">1.6</div><div class="yt" style="top:293.9px">1.6</div><div class="xt" style="left:675.3px;top:616px">1.8</div><div class="yt" style="top:242.3px">1.8</div><div class="xt" style="left:727.0px;top:616px">2</div><div class="yt" style="top:190.8px">2</div><div class="xt" style="left:778.6px;top:616px">2.2</div><div class="yt" style="top:139.3px">2.2</div><div class="xt" style="left:830.2px;top:616px">2.4</div><div class="yt" style="top:87.8px">2.4</div>
<div class="a" style="left:531px;top:631px;font-family:'Liberation Serif',serif;font-size:16px;color:#383838;line-height:18px;white-space:nowrap">A-B bond distance<span style="margin-left:7px">(</span><span style="margin:0 -1px 0 0">Å</span>)</div>
<div class="a" style="left:288px;top:411px;transform:rotate(-90deg);transform-origin:0 0;font-family:'Liberation Serif',serif;font-size:16px;color:#383838;line-height:18px;white-space:nowrap">B-C bond distance<span style="margin-left:7px">(</span><span style="margin:0 -1px 0 0">Å</span>)</div>
</body></html>
